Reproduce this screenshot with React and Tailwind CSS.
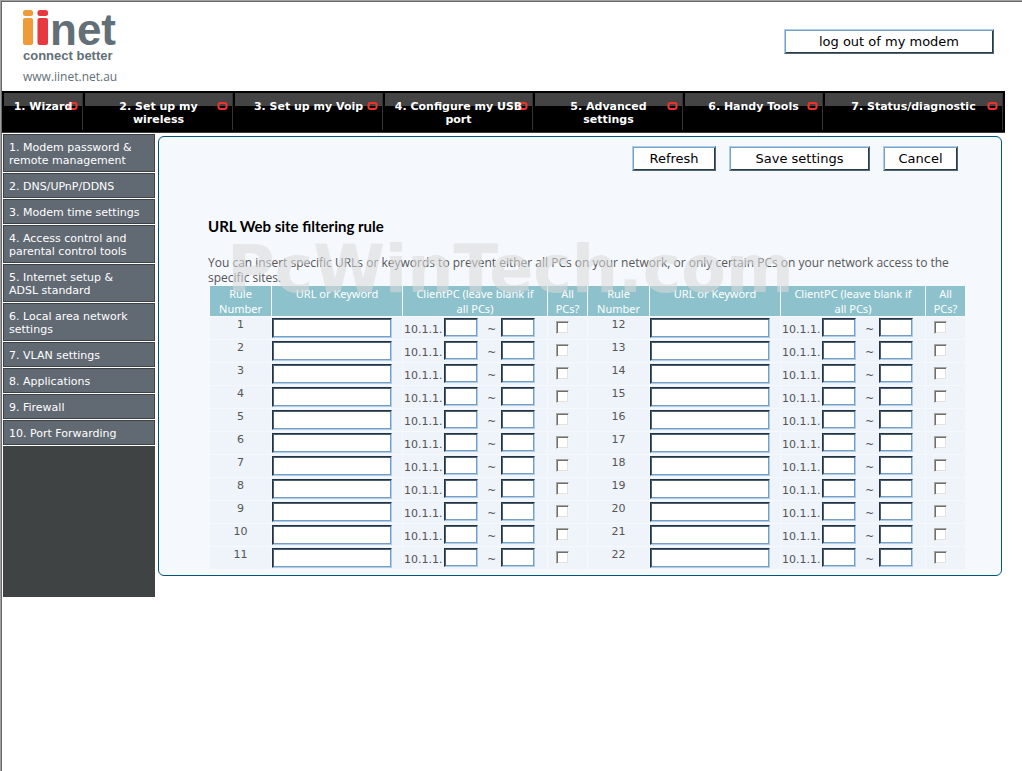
import React from "react";

const tabs = [
  "1. Wizard",
  "2. Set up my wireless",
  "3. Set up my Voip",
  "4. Configure my USB port",
  "5. Advanced settings",
  "6. Handy Tools",
  "7. Status/diagnostic",
];

const sideLinks = [
  "1. Modem password & remote management",
  "2. DNS/UPnP/DDNS",
  "3. Modem time settings",
  "4. Access control and parental control tools",
  "5. Internet setup & ADSL standard",
  "6. Local area network settings",
  "7. VLAN settings",
  "8. Applications",
  "9. Firewall",
  "10. Port Forwarding",
];

const rows = Array.from({ length: 11 }, (_, i) => i + 1);

function Button({ className, children }) {
  return (
    <button
      type="button"
      className={`h-[25px] border border-t-[#a9cff0] border-l-[#a9cff0] border-r-[#4f667a] border-b-[#4f667a] bg-white text-[13px] leading-none whitespace-nowrap text-black shadow-[inset_1px_1px_0_#7b9fc0,inset_-1px_-1px_0_#2c3a44] ${className}`}
    >
      {children}
    </button>
  );
}

function TextBox({ label, className }) {
  return (
    <input
      type="text"
      aria-label={label}
      className={`block border border-t-[#24333f] border-l-[#24333f] border-r-[#a9cff0] border-b-[#a9cff0] bg-white px-1 text-[11px] shadow-[inset_1px_1px_0_#4a5f73,inset_-1px_-1px_0_#7a9dbf] outline-none ${className}`}
    />
  );
}

function Logo() {
  return (
    <div className="w-32 text-[#626f76]">
      <div className="flex h-9 items-baseline" role="img" aria-label="iinet">
        <svg width="27" height="35" viewBox="0 0 27 35" className="shrink-0">
          <g fill="#f19a38">
            <rect x="0" y="0" width="10" height="6" rx="2.5" />
            <rect x="0" y="8" width="10" height="27" rx="2" />
          </g>
          <g fill="#e8373f">
            <rect x="14.500" y="0" width="10.500" height="6" rx="2.5" />
            <rect x="14.500" y="8" width="10.500" height="27" rx="2" />
          </g>
        </svg>
        <span className="font-['Liberation_Sans',sans-serif] text-[44px] leading-[39px] font-bold">
          net
        </span>
      </div>
      <div className="mt-0.5 font-['Liberation_Sans',sans-serif] text-[13px] leading-[16px] font-bold whitespace-nowrap">
        connect better
      </div>
      <div className="mt-1.5 font-['Open_Sans',sans-serif] text-[12px] leading-[14px]">
        www.iinet.net.au
      </div>
    </div>
  );
}

function HeadCells() {
  return (
    <>
      <th className="w-[61px] p-0 font-normal">Rule Number</th>
      <th className="w-[130px] p-0 font-normal">URL or Keyword</th>
      <th className="w-[144px] px-2 py-0 font-normal">ClientPC (leave blank if all PCs)</th>
      <th className="w-[39px] px-1 py-0 font-normal">All PCs?</th>
    </>
  );
}

function RuleCells({ n }) {
  return (
    <>
      <td className="p-0 text-center">{n}</td>
      <td className="p-0 pt-px">
        <TextBox label={`Rule ${n} URL or keyword`} className="h-5 w-[120px]" />
      </td>
      <td className="p-0 pt-px pl-px">
        <div className="flex">
          <span className="w-10 pt-1">10.1.1.</span>
          <TextBox label={`Rule ${n} first client`} className="h-[19px] w-[34px]" />
          <span className="w-[23px] pt-1 pl-1 text-center">~</span>
          <TextBox label={`Rule ${n} last client`} className="h-[19px] w-[34px]" />
        </div>
      </td>
      <td className="p-0 pt-1 pl-2">
        <input
          type="checkbox"
          aria-label={`Rule ${n} all PCs`}
          className="block size-[13px] appearance-none border border-t-[#a5a5a5] border-l-[#a5a5a5] border-r-[#f4f4f4] border-b-[#f4f4f4] bg-white shadow-[inset_1px_1px_0_#716f64,inset_-1px_-1px_0_#e2e2e2] checked:bg-[#4a5f73]"
        />
      </td>
    </>
  );
}

export default function App() {
  return (
    <div className="min-h-screen border-t border-l border-[#a0a0a0] bg-white font-['DejaVu_Sans',Verdana,sans-serif] text-[11px]">
      <div className="min-h-screen border-t border-l border-[#696969]">
        <header className="flex h-[89px] items-start justify-between pt-2 pr-7 pl-[21px]">
          <Logo />
          <Button className="mt-[19px] w-[210px]">log out of my modem</Button>
        </header>

        <nav className="mr-[17px] grid h-[42px] grid-cols-[81fr_150fr_150fr_150fr_150fr_140fr_180fr] border-b border-[#3a3a3a] bg-black pt-0.5 pr-0.5">
          {tabs.map((t) => (
            <a
              key={t}
              href="#"
              className="relative mb-0.5 ml-0.5 block border-r border-[#333] bg-[linear-gradient(#444_13px,#000_13px)] px-1 pt-[7px] text-center leading-[13px] font-bold text-white"
            >
              <svg
                className="absolute top-[9px] right-1"
                width="11"
                height="8"
                viewBox="0 0 11 8"
                fill="none"
                stroke="#f5302c"
                strokeWidth="2"
              >
                <rect x="1.500" y="1" width="8" height="6" rx="2" />
              </svg>
              <span className="relative mx-auto block max-w-[130px]">{t}</span>
            </a>
          ))}
        </nav>

        <div className="flex items-start pr-5">
          <aside className="mt-px ml-px min-h-[463px] w-[152px] shrink-0 bg-[#3f4343]">
            {sideLinks.map((t) => (
              <a
                key={t}
                href="#"
                className="block border-b border-white text-white"
              >
                <span className="block border border-[#3c4246] bg-[#616973] pt-1.5 pr-3 pb-1 pl-[5px] leading-[13px]">
                  {t}
                </span>
              </a>
            ))}
          </aside>

          <main className="relative mt-[3px] ml-[3px] flex-1 rounded-[6px] border border-[#00567f] bg-[#f5f9fd] pt-[9px] pr-[35px] pb-[5px] pl-[49px]">
            <div className="mr-2 flex justify-end gap-[13px]">
              <Button className="w-[84px]">Refresh</Button>
              <Button className="w-[141px]">Save settings</Button>
              <Button className="w-[75px]">Cancel</Button>
            </div>
            <h1 className="mt-[45px] font-[Lato,Carlito,sans-serif] text-[15px] leading-5 font-bold text-black">
              URL Web site filtering rule
            </h1>
            <p className="mt-[19px] font-['Open_Sans',sans-serif] text-[12px] leading-[15px] text-[#555]">
              You can insert specific URLs or keywords to prevent either all PCs on your network, or only
              certain PCs on your network access to the specific sites.
            </p>
            <table className="ml-px w-[calc(100%-1px)] table-fixed border-separate border-spacing-px leading-[15px]">
              <thead>
                <tr className="h-[30px] align-top font-['Noto_Sans',sans-serif] text-white [&>th]:bg-[#8dc2cc]">
                  <HeadCells />
                  <HeadCells />
                </tr>
              </thead>
              <tbody>
                {rows.map((n) => (
                  <tr key={n} className="h-[22px] align-top text-[#555] [&>td]:bg-[#eff4fb]">
                    <RuleCells n={n} />
                    <RuleCells n={n + 11} />
                  </tr>
                ))}
              </tbody>
            </table>
            <div className="pointer-events-none absolute top-[97px] left-[68px] text-[65px] leading-[72px] font-bold text-[#dedede]/50 [text-shadow:0_0_1px_rgba(190,190,190,0.15)]">
              PcWinTech.com
            </div>
          </main>
        </div>
      </div>
    </div>
  );
}
